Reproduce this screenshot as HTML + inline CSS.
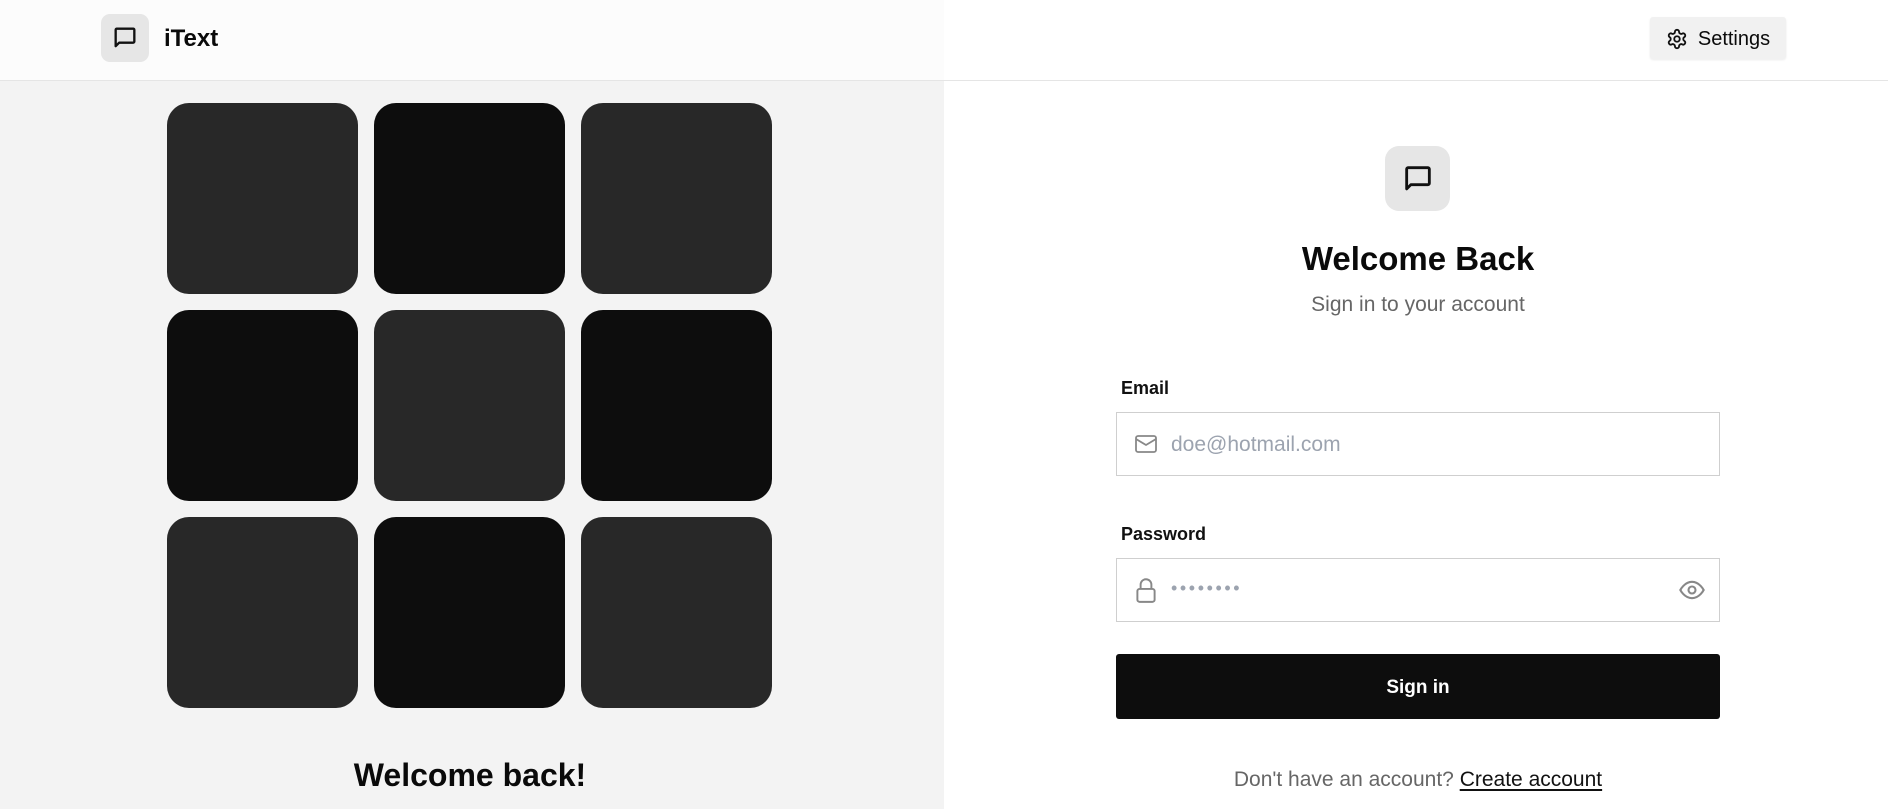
<!DOCTYPE html>
<html><head><meta charset="utf-8">
<style>
*{margin:0;padding:0;box-sizing:border-box}
body{width:1888px;height:809px;overflow:hidden;font-family:"Liberation Sans",sans-serif;background:#fff;position:relative;color:#0a0a0a}
.abs{position:absolute}
.left{left:0;top:0;width:944px;height:809px;background:#f3f3f3}
.header{left:0;top:0;width:1888px;height:81px;border-bottom:1px solid #e5e5e5;background:linear-gradient(90deg,#fcfcfc 0 944px,#fff 944px)}
.logo{left:101px;top:14px;width:48px;height:48px;border-radius:9px;background:#e6e6e6;display:flex;align-items:center;justify-content:center}
.brand{left:164px;top:25px;font-size:24px;font-weight:bold}
.tile{width:191px;height:191px;border-radius:22px}
.a{background:#282828}.b{background:#0d0d0d}
.wb{left:0;width:940px;top:757px;text-align:center;font-size:32px;font-weight:bold}
.settings{left:1650px;top:17px;width:136px;height:42px;background:#f1f1f1;border-radius:3px;box-shadow:0 1px 2px rgba(0,0,0,.08);display:flex;align-items:center;justify-content:center;gap:10px;font-size:20px;padding-top:2px}
.icon2{left:1385px;top:146px;width:65px;height:65px;border-radius:14px;background:#e6e6e6;display:flex;align-items:center;justify-content:center}
.title{left:944px;width:948px;top:240px;text-align:center;font-size:33px;font-weight:bold}
.sub{left:944px;width:948px;top:293px;text-align:center;font-size:21px;color:#666}
.label{left:1121px;font-size:18px;font-weight:bold;color:#111}
.input{left:1116px;width:604px;height:64px;border:1px solid #cfcfcf;background:#fff}
.ph{position:absolute;left:54px;top:20px;font-size:21px;color:#9ca3af}
.btn{left:1116px;top:654px;width:604px;height:65px;background:#0d0d0d;border-radius:3px;color:#fff;font-weight:bold;font-size:19px;display:flex;align-items:center;justify-content:center;padding-top:2px}
.foot{left:944px;width:948px;top:768px;text-align:center;font-size:21px;color:#666}
.foot u{color:#111;text-decoration:underline;text-underline-offset:3px}
</style></head><body>
<div class="abs left"></div>
<div class="abs header"></div>
<div class="abs logo"><svg width="28" height="28" viewBox="0 0 24 24" fill="none" stroke="#111" stroke-width="2" stroke-linejoin="round" stroke-linecap="round"><path d="M4 5a1 1 0 0 1 1-1h14a1 1 0 0 1 1 1v10a1 1 0 0 1-1 1H7l-3 3z"/></svg></div>
<div class="abs brand">iText</div>

<div class="abs tile a" style="left:167px;top:103px"></div>
<div class="abs tile b" style="left:374px;top:103px"></div>
<div class="abs tile a" style="left:581px;top:103px"></div>
<div class="abs tile b" style="left:167px;top:310px"></div>
<div class="abs tile a" style="left:374px;top:310px"></div>
<div class="abs tile b" style="left:581px;top:310px"></div>
<div class="abs tile a" style="left:167px;top:517px"></div>
<div class="abs tile b" style="left:374px;top:517px"></div>
<div class="abs tile a" style="left:581px;top:517px"></div>
<div class="abs wb">Welcome back!</div>

<div class="abs settings"><svg width="22" height="22" viewBox="0 0 24 24" fill="none" stroke="#111" stroke-width="2" stroke-linejoin="round"><path d="M12.22 2h-.44a2 2 0 0 0-2 2v.18a2 2 0 0 1-1 1.73l-.43.25a2 2 0 0 1-2 0l-.15-.08a2 2 0 0 0-2.73.73l-.22.38a2 2 0 0 0 .73 2.73l.15.1a2 2 0 0 1 1 1.72v.51a2 2 0 0 1-1 1.74l-.15.09a2 2 0 0 0-.73 2.73l.22.38a2 2 0 0 0 2.73.73l.15-.08a2 2 0 0 1 2 0l.43.25a2 2 0 0 1 1 1.73V20a2 2 0 0 0 2 2h.44a2 2 0 0 0 2-2v-.18a2 2 0 0 1 1-1.73l.43-.25a2 2 0 0 1 2 0l.15.08a2 2 0 0 0 2.73-.73l.22-.39a2 2 0 0 0-.73-2.73l-.15-.08a2 2 0 0 1-1-1.74v-.5a2 2 0 0 1 1-1.74l.15-.09a2 2 0 0 0 .73-2.73l-.22-.38a2 2 0 0 0-2.73-.73l-.15.08a2 2 0 0 1-2 0l-.43-.25a2 2 0 0 1-1-1.73V4a2 2 0 0 0-2-2z"/><circle cx="12" cy="12" r="3"/></svg><span>Settings</span></div>

<div class="abs icon2"><svg width="34" height="34" viewBox="0 0 24 24" fill="none" stroke="#111" stroke-width="2" stroke-linejoin="round" stroke-linecap="round"><path d="M4 5a1 1 0 0 1 1-1h14a1 1 0 0 1 1 1v10a1 1 0 0 1-1 1H7l-3 3z"/></svg></div>
<div class="abs title">Welcome Back</div>
<div class="abs sub">Sign in to your account</div>

<div class="abs label" style="top:378px">Email</div>
<div class="abs input" style="top:412px">
<svg style="position:absolute;left:16px;top:19px" width="26" height="24" viewBox="0 0 24 24" fill="none" stroke="#888" stroke-width="1.8" stroke-linejoin="round"><rect x="2" y="4" width="20" height="16" rx="2"/><path d="M22 7l-10 6L2 7"/></svg>
<span class="ph">doe@hotmail.com</span></div>

<div class="abs label" style="top:524px">Password</div>
<div class="abs input" style="top:558px">
<svg style="position:absolute;left:16px;top:17px" width="26" height="28" viewBox="0 0 24 26" fill="none" stroke="#888" stroke-width="1.8" stroke-linejoin="round"><rect x="4" y="12" width="16" height="12" rx="2"/><path d="M7 12V8a5 5 0 0 1 10 0v4"/></svg>
<span class="ph" style="top:19px;font-size:18px;letter-spacing:2.6px">••••••••</span>
<svg style="position:absolute;left:561px;top:17px" width="28" height="28" viewBox="0 0 24 24" fill="none" stroke="#888" stroke-width="1.8"><path d="M2 12s3.5-7 10-7 10 7 10 7-3.5 7-10 7S2 12 2 12z"/><circle cx="12" cy="12" r="3"/></svg>
</div>

<div class="abs btn">Sign in</div>
<div class="abs foot">Don't have an account? <u>Create account</u></div>
</body></html>
